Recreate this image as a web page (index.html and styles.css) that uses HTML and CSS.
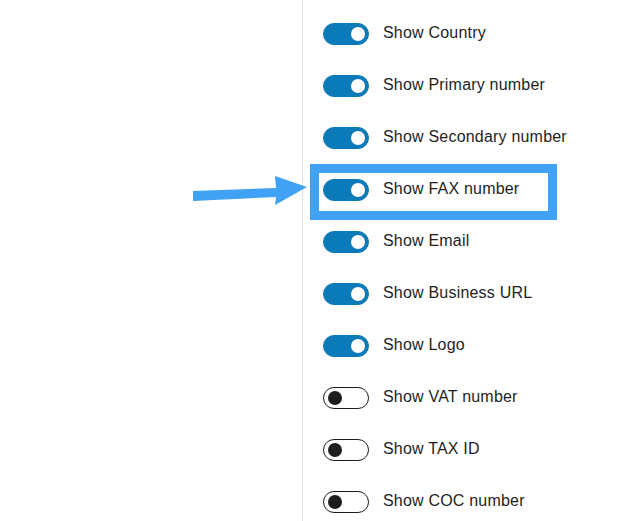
FILE: index.html
```html
<!DOCTYPE html>
<html lang="en">
<head>
  <meta charset="UTF-8">
  <meta name="viewport" content="width=device-width, initial-scale=1.0">
  <title>Address settings</title>
  <link rel="stylesheet" href="styles.css">
</head>
<body>
  <div class="page">
    <div class="gutter"></div>
    <div class="panel">
      <div class="row"><span class="toggle on"></span><span class="label">Show Country</span></div>
      <div class="row"><span class="toggle on"></span><span class="label">Show Primary number</span></div>
      <div class="row"><span class="toggle on"></span><span class="label">Show Secondary number</span></div>
      <div class="row marked"><span class="toggle on"></span><span class="label">Show FAX number</span></div>
      <div class="row"><span class="toggle on"></span><span class="label">Show Email</span></div>
      <div class="row"><span class="toggle on"></span><span class="label">Show Business URL</span></div>
      <div class="row"><span class="toggle on"></span><span class="label">Show Logo</span></div>
      <div class="row"><span class="toggle"></span><span class="label">Show VAT number</span></div>
      <div class="row"><span class="toggle"></span><span class="label">Show TAX ID</span></div>
      <div class="row"><span class="toggle"></span><span class="label">Show COC number</span></div>
    </div>
  </div>

  <!-- annotation -->
  <svg class="arrow" width="120" height="40" viewBox="0 0 120 40">
    <polygon points="3,21 86,18 85,6 117,17 85,35 86,27 3,31" fill="#3fa2f4"/>
  </svg>
</body>
</html>
```

FILE: styles.css
```css
body {
  margin: 0;
  background: #fff;
  color: #1e1e1e;
  font-family: "Liberation Sans", Arial, sans-serif;
  font-size: 16px;
}

.page {
  display: flex;
  min-height: 521px;
}
.gutter {
  width: 302px;
  flex: none;
}
.panel {
  border-left: 1px solid #e0e0e0;
  padding: 8px 0 0 20px;
  flex: 1;
}

.row {
  position: relative;
  height: 52px;
  display: flex;
  align-items: center;
  gap: 14px;
}
.label {
  letter-spacing: 0.2px;
  margin-top: -2px;
}

.toggle {
  position: relative;
  box-sizing: border-box;
  width: 46px;
  height: 22px;
  border-radius: 11px;
  border: 1.5px solid #1e1e1e;
  background: #fff;
  flex: none;
}
.toggle::after {
  content: "";
  position: absolute;
  top: 2.5px;
  left: 3.5px;
  width: 14px;
  height: 14px;
  border-radius: 50%;
  background: #1e1e1e;
}
.toggle.on {
  border-color: #0a7ab8;
  background: #0a7ab8;
}
.toggle.on::after {
  left: auto;
  right: 3.5px;
  background: #fff;
}

/* blue highlight box round the FAX row */
.marked::before {
  content: "";
  position: absolute;
  left: -13px;
  top: 0;
  width: 229px;
  height: 38px;
  border: 9px solid #3fa2f4;
}

.arrow {
  position: absolute;
  left: 190px;
  top: 170px;
}
```
